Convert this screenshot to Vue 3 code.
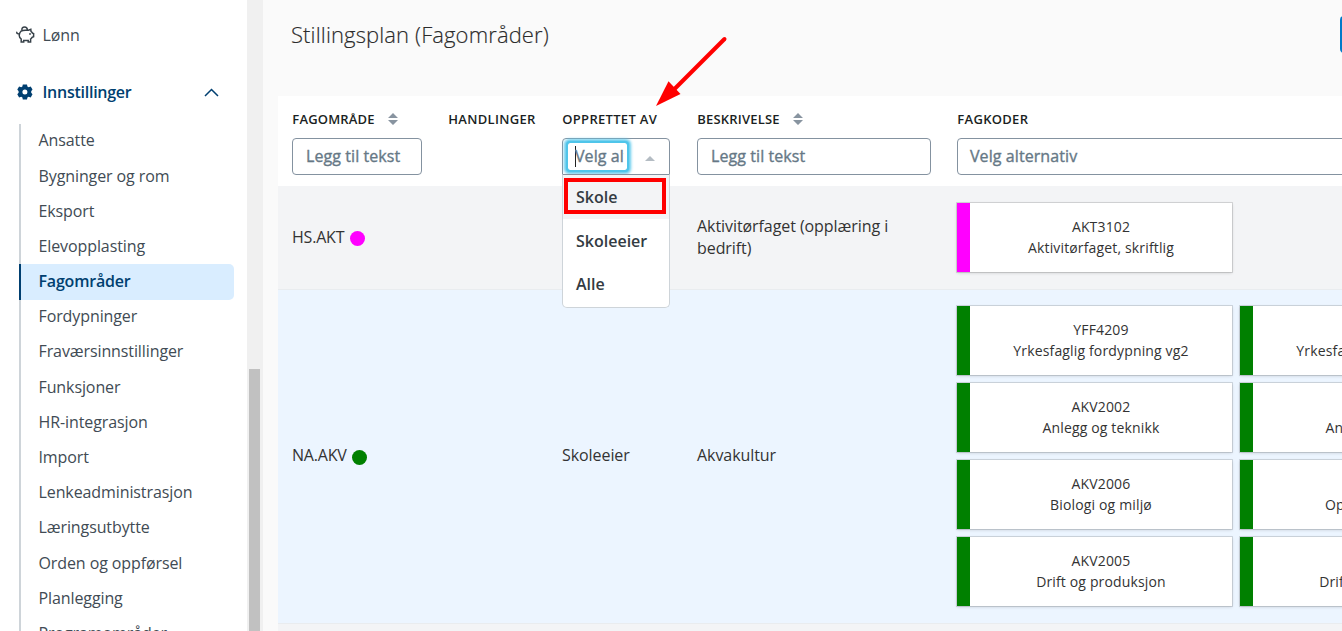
<script setup>
import { ref } from 'vue';

const menuItems = [
  'Ansatte',
  'Bygninger og rom',
  'Eksport',
  'Elevopplasting',
  'Fagområder',
  'Fordypninger',
  'Fraværsinnstillinger',
  'Funksjoner',
  'HR-integrasjon',
  'Import',
  'Lenkeadministrasjon',
  'Læringsutbytte',
  'Orden og oppførsel',
  'Planlegging',
  'Programområder',
];
const activeItem = ref('Fagområder');

const options = ['Skole', 'Skoleeier', 'Alle'];
const highlighted = ref('Skole');

const rows = [
  {
    code: 'HS.AKT',
    color: 'magenta',
    owner: '',
    description: 'Aktivitørfaget (opplæring i bedrift)',
    subjects: [{ code: 'AKT3102', name: 'Aktivitørfaget, skriftlig' }],
  },
  {
    code: 'NA.AKV',
    color: 'green',
    owner: 'Skoleeier',
    description: 'Akvakultur',
    subjects: [
      { code: 'YFF4209', name: 'Yrkesfaglig fordypning vg2' },
      { code: 'YFF4210', name: 'Yrkesfaglig fordypning vg2' },
      { code: 'AKV2002', name: 'Anlegg og teknikk' },
      { code: 'AKV2003', name: 'Anlegg og teknikk' },
      { code: 'AKV2006', name: 'Biologi og miljø' },
      { code: 'AKV2007', name: 'Oppdrett og miljø' },
      { code: 'AKV2005', name: 'Drift og produksjon' },
      { code: 'AKV2004', name: 'Drift og produksjon' },
    ],
  },
];
</script>

<template>
  <div class="app">
    <nav class="sidebar">
      <div class="nav-group salary">
        <svg class="pig" width="20" height="18" viewBox="0 0 20 18" fill="none" stroke="#38424a" stroke-width="1.5">
          <path d="M.9 5.8c-.4 1.6.6 2.3 2 1.8M5 5.2C6.4 4.4 7.8 4.2 9.4 4.2h3.1l2.3-.9.2 2c.7.5 1.2 1.1 1.5 1.8l1.1.4v3.2l-1.5.6c-.4.8-.9 1.3-1.5 1.7v3h-2.4v-1.6H7.7v1.6H5.2v-3c-1.5-1.1-2.2-2.5-1.9-4.2.2-1.5.7-2.7 1.7-3.6z" />
          <path d="M5.9 4.4C5.7 2 6.8 1.1 8.5 1.1c1.6 0 2.8.9 2.9 3" />
          <circle cx="14" cy="8" r=".3" />
        </svg>
        <span>Lønn</span>
      </div>
      <div class="nav-group settings">
        <svg class="gear" width="16" height="16" viewBox="0 0 16 16" fill="#003f70" fill-rule="evenodd">
          <path d="M5.8.6h4.2l.4 2 1.2.6 2.1-.7 1.8 3.1-1.3 1.6v1.5l1.3 1.6-1.8 3.2-2.1-.7-1.2.6-.4 2H5.8l-.4-2-1.2-.6-2.1.7L.3 10.3l1.3-1.6V7.2L.3 5.6l1.8-3.1 2.1.7 1.2-.6zM7.9 5.5a2.5 2.5 0 1 0 0 5 2.5 2.5 0 0 0 0-5z" />
        </svg>
        <span>Innstillinger</span>
        <svg class="chevron" width="15" height="9" viewBox="0 0 15 9" fill="none" stroke="#003f70" stroke-width="1.5">
          <path d="M1 8l6.5-6.5L14 8" />
        </svg>
      </div>
      <ul class="submenu">
        <li
          v-for="item in menuItems"
          :key="item"
          :class="{ active: item === activeItem }"
          @click="activeItem = item"
        >
          <span>{{ item }}</span>
        </li>
      </ul>
    </nav>
    <div class="scrollbar"><div class="thumb"></div></div>

    <main class="content">
      <header class="page-header">
        <h1>Stillingsplan (Fagområder)</h1>
        <button class="primary"></button>
      </header>

      <section class="table">
        <div class="table-head">
          <div class="col">
            <div class="label">
              FAGOMRÅDE
              <svg class="sort" width="10" height="12" viewBox="0 0 10 12"><path d="M5 0l5 5H0zM0 7h10l-5 5z" /></svg>
            </div>
            <div class="field w-code">Legg til tekst</div>
          </div>
          <div class="col">
            <div class="label">HANDLINGER</div>
          </div>
          <div class="col">
            <div class="label">OPPRETTET AV</div>
            <div class="field select">
              <div class="search"><span class="caret"></span><span class="typed">Velg alternativ</span></div>
              <svg class="arrow-up" width="10" height="5" viewBox="0 0 10 5"><path d="M5 0l5 5H0z" /></svg>
              <ul class="dropdown">
                <li
                  v-for="option in options"
                  :key="option"
                  :class="{ highlighted: option === highlighted }"
                  @mouseenter="highlighted = option"
                >
                  {{ option }}
                </li>
              </ul>
              <div class="marker"></div>
            </div>
          </div>
          <div class="col">
            <div class="label">
              BESKRIVELSE
              <svg class="sort" width="10" height="12" viewBox="0 0 10 12"><path d="M5 0l5 5H0zM0 7h10l-5 5z" /></svg>
            </div>
            <div class="field w-desc">Legg til tekst</div>
          </div>
          <div class="col">
            <div class="label">FAGKODER</div>
            <div class="field w-subjects">Velg alternativ</div>
          </div>
        </div>

        <div v-for="row in rows" :key="row.code" class="table-row">
          <div class="cell code">{{ row.code }}<span class="dot" :style="{ background: row.color }"></span></div>
          <div></div>
          <div class="cell">{{ row.owner }}</div>
          <div class="cell description">{{ row.description }}</div>
          <div class="cards">
            <div
              v-for="subject in row.subjects"
              :key="subject.code"
              class="card"
              :style="{ borderLeftColor: row.color }"
            >
              <span>{{ subject.code }}</span>
              <span>{{ subject.name }}</span>
            </div>
          </div>
        </div>
        <div class="table-row next"></div>
      </section>
    </main>

    <svg class="pointer" width="76" height="74" viewBox="0 0 76 74">
      <path d="M72.5 5L20 57.5" stroke="#f00" stroke-width="4" stroke-linecap="round" />
      <path d="M4 72l12.5-24.7L28.5 60z" fill="#f00" />
    </svg>
  </div>
</template>

<style>
body {
  overflow: hidden;
}
</style>

<style scoped>
.app {
  position: relative;
  display: flex;
  width: 1342px;
  height: 631px;
  overflow: hidden;
  background: #fafafa;
  color: #333;
  font-family: 'Open Sans', 'Noto Sans', sans-serif;
  font-size: 16px;
}

ul {
  list-style: none;
  margin: 0;
  padding: 0;
}

.sidebar {
  width: 247px;
  flex: none;
  background: #fff;
  color: #414b54;
}

.nav-group {
  display: flex;
  align-items: center;
  height: 24px;
}

.salary {
  margin-top: 23px;
  padding-left: 16px;
  letter-spacing: -0.1px;
}

.pig {
  margin-right: 6.5px;
}

.settings {
  margin-top: 33px;
  padding: 0 28px 0 17px;
  color: #003f70;
  font-weight: 600;
  letter-spacing: -0.26px;
}

.gear {
  margin-right: 9.5px;
}

.chevron {
  margin-left: auto;
}

.submenu {
  margin: 19.6px 13px 0 19px;
  letter-spacing: -0.1px;
}

.submenu li {
  display: flex;
  height: 35.2px;
  line-height: 34px;
  padding-left: 17.5px;
  border-left: 2px solid #ced4d9;
  box-sizing: border-box;
  cursor: pointer;
}

.submenu span {
  margin-top: -0.26px;
}

.submenu li.active {
  border-left-color: #003f70;
  border-radius: 0 5px 5px 0;
  background: #d9edff;
  color: #003f70;
  font-weight: 600;
  letter-spacing: -0.2px;
}

.scrollbar {
  width: 16px;
  flex: none;
  box-sizing: border-box;
  padding: 369px 3px 0 2px;
  background: #f0f0f0;
}

.thumb {
  height: 262px;
  background: #c1c1c1;
}

.content {
  flex: 1;
  min-width: 0;
  padding-left: 15px;
}

.page-header {
  display: flex;
  align-items: flex-start;
  justify-content: space-between;
  height: 96px;
}

h1 {
  margin: 18px 0 0 13px;
  font-size: 22px;
  line-height: 32px;
  font-weight: 300;
  letter-spacing: 0.12px;
  color: #2b2b2b;
  -webkit-text-stroke: 0.15px #2b2b2b;
}

.primary {
  flex: none;
  width: 90px;
  height: 37px;
  margin: 16px -88px 0 0;
  border: 0;
  border-radius: 4px;
  background: #007ac9;
}

.table-head,
.table-row {
  display: grid;
  grid-template-columns: 156px 114px 135px 260px 566px;
  width: 1245px;
  box-sizing: border-box;
  padding-left: 14px;
}

.table-head {
  height: 91px;
  padding-top: 13px;
  border-bottom: 1px solid #f3f4f6;
  background: #fff;
}

.label {
  display: flex;
  align-items: center;
  height: 20px;
  margin-bottom: 9px;
  padding-left: 0.3px;
  color: #1b1f23;
  font-size: 13px;
  font-weight: 600;
  letter-spacing: 0.3px;
  white-space: nowrap;
}

.col:nth-child(1) .label,
.col:nth-child(4) .label {
  letter-spacing: 0.18px;
}

.sort {
  margin-left: 13.3px;
  fill: #8894a0;
}

.field {
  box-sizing: border-box;
  height: 37px;
  padding-left: 13px;
  border: 1px solid #8492a0;
  border-radius: 4px;
  background: #fff;
  color: #667886;
  line-height: 35px;
  letter-spacing: 0.08px;
  -webkit-text-stroke: 0.35px #667886;
}

.w-code {
  width: 130px;
}

.w-desc {
  width: 234px;
}

.w-subjects {
  width: 560px;
  padding-left: 12px;
}

.select {
  position: relative;
  display: flex;
  align-items: center;
  width: 108px;
  padding: 0 14px 0 5px;
  border-radius: 4px 4px 0 0;
}

.search {
  display: flex;
  align-items: center;
  width: 59px;
  height: 27px;
  flex: none;
  box-sizing: border-box;
  padding: 0 3px 0 7px;
  border-radius: 2px;
  box-shadow: 0 0 0 2px #4fc5ea, 0 0 3px 4px #62cbed;
}

.caret {
  width: 1px;
  height: 21px;
  flex: none;
  background: #222;
}

.typed {
  margin-left: -1px;
  overflow: hidden;
  white-space: nowrap;
  line-height: 27px;
}

.arrow-up {
  margin: 4px 0 0 auto;
  fill: #b4bcc3;
}

/* option list opens over the table rows */
.dropdown {
  position: absolute;
  top: 35px;
  left: -1px;
  z-index: 2;
  width: 108px;
  height: 134px;
  box-sizing: border-box;
  border: 1px solid #ced4d9;
  border-top-color: #8492a0;
  border-radius: 0 0 5px 5px;
  overflow: hidden;
  background: #fff;
  color: #333b42;
  letter-spacing: 0;
  -webkit-text-stroke: 0;
}

.dropdown li {
  height: 43.7px;
  line-height: 44px;
  padding-left: 13px;
  font-weight: 600;
}

.dropdown li.highlighted {
  background: #f3f4f6;
}

.marker {
  position: absolute;
  top: 39px;
  left: 1px;
  z-index: 3;
  width: 102px;
  height: 36px;
  box-sizing: border-box;
  border: 4px solid #f00;
}

.table-row {
  align-items: center;
  padding-top: 16px;
  padding-bottom: 17px;
  border-bottom: 1px solid #e9ecef;
  background: #f3f4f6;
  line-height: 22px;
}

.table-row:nth-child(3) {
  background: #ecf5ff;
}

.table-row.next {
  height: 40px;
}

.cell {
  padding-bottom: 2px;
  letter-spacing: -0.07px;
}

.code {
  display: flex;
  align-items: center;
  letter-spacing: -0.2px;
}

.dot {
  width: 15px;
  height: 15px;
  margin: 4px 0 0 5.5px;
  border-radius: 50%;
}

.description {
  width: 215px;
}

.cards {
  display: grid;
  grid-template-columns: 275px 275px;
  gap: 8px;
}

.card {
  display: flex;
  flex-direction: column;
  align-items: center;
  justify-content: center;
  height: 69px;
  box-sizing: border-box;
  padding-bottom: 2px;
  border-left: 13px solid;
  background: #fff;
  box-shadow: 0 0 0 1px rgba(0, 0, 0, 0.12), 0 1px 3px rgba(0, 0, 0, 0.16);
  font-size: 14px;
  line-height: 21px;
  letter-spacing: 0.15px;
}

.pointer {
  position: absolute;
  top: 34px;
  left: 652px;
}
</style>
